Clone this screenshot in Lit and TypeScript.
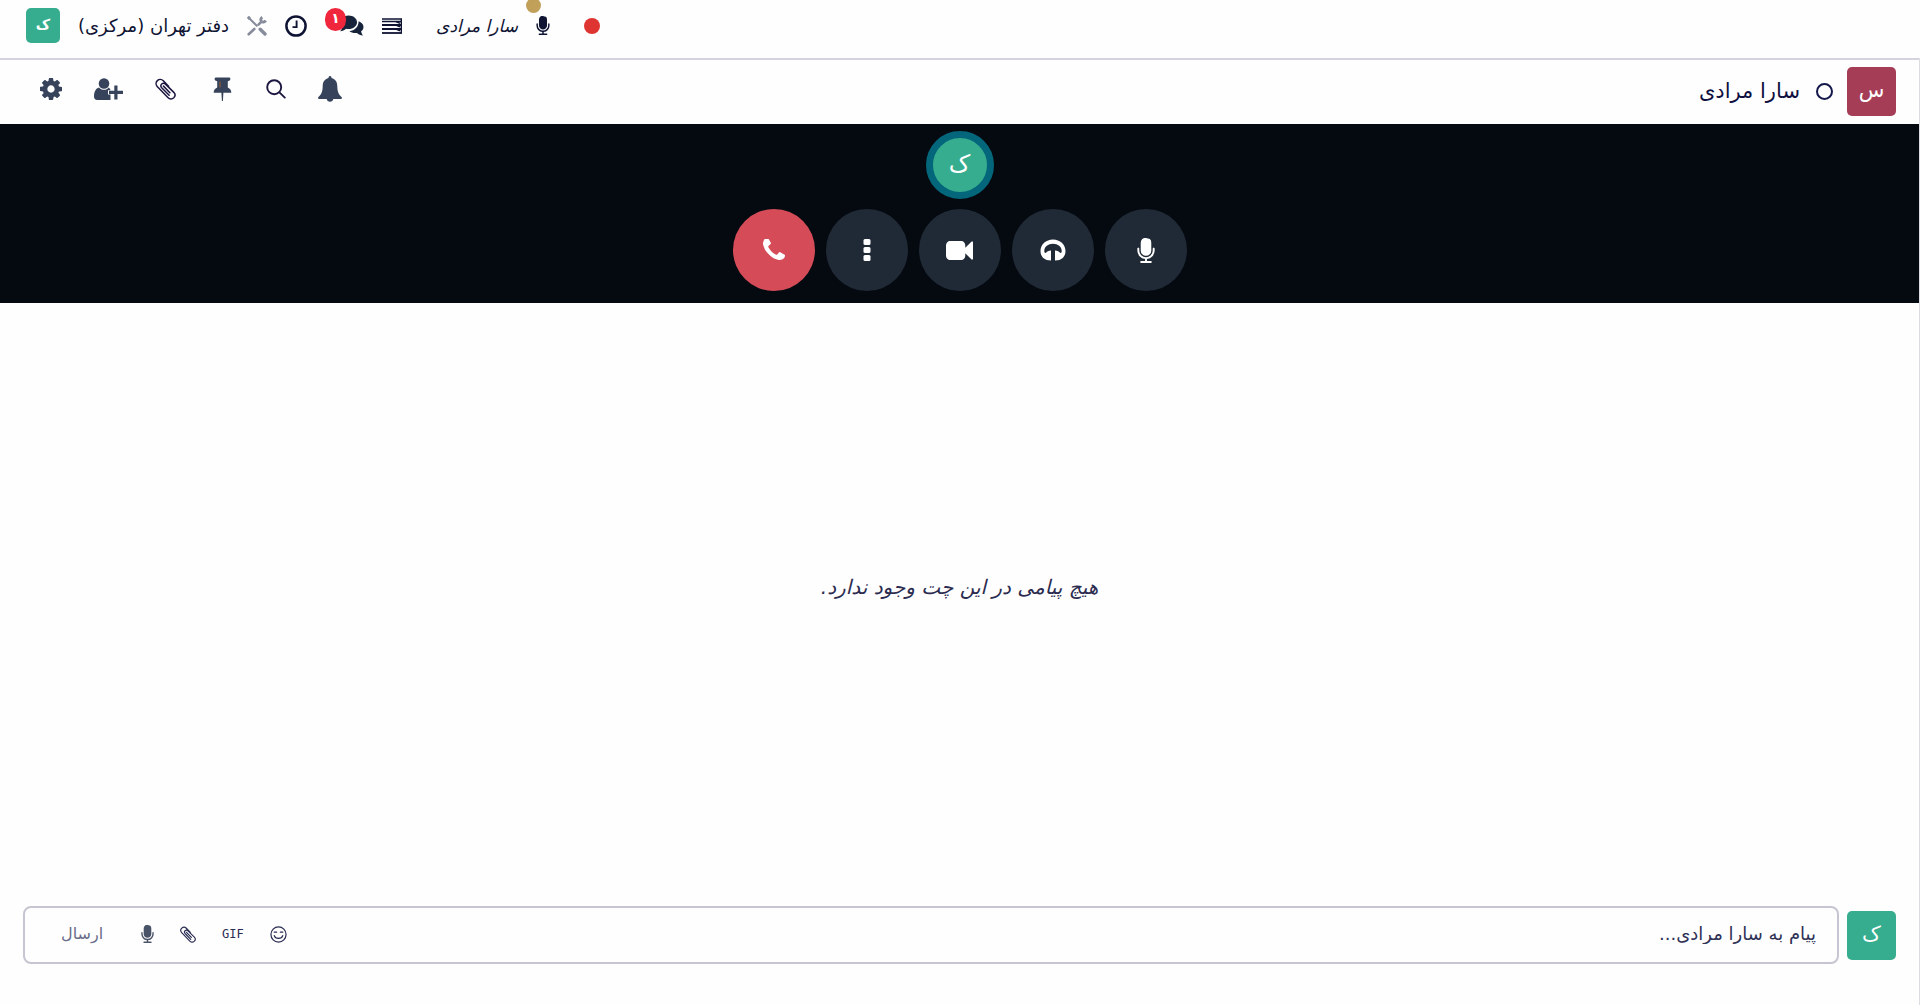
import { LitElement, html, css, svg, TemplateResult } from "lit";
import { customElement, property } from "lit/decorators.js";

interface Glyph {
  box: string;
  body: TemplateResult;
}

const glyphs: Record<string, Glyph> = {
  phone: {
    box: "192 192 1408 1408",
    body: svg`<path fill="currentColor" d="M1600 1240q0 27-10 70.5t-21 68.5q-21 50-122 106-94 51-186 51-27 0-53-3.5t-57.5-12.5-47-14.5-55.5-20.5-49-18q-98-35-175-83-127-79-264-216t-216-264q-48-77-83-175-3-9-18-49t-20.5-55.5-14.5-47-12.5-57.5-3.5-53q0-92 51-186 56-101 106-122 25-11 68.5-21t70.5-10q14 0 21 3 18 6 53 76 11 19 30 54t35 63.5 31 53.5q3 4 17.5 25t21.5 35.5 7 28.5q0 20-28.5 50t-62 55-62 53-28.5 46q0 9 5 22.5t8.5 20.5 14 24 11.5 19q76 137 174 235t235 174q2 1 19 11.5t24 14 20.5 8.5 22.5 5q18 0 46-28.5t53-62 55-62 50-28.5q14 0 28.5 7t35.5 21.5 25 17.5q25 15 53.5 31t63.5 35 54 30q70 35 76 53 3 7 3 21z"/>`,
  },
  more: {
    box: "0 0 8 22",
    body: svg`<g fill="currentColor"><rect x="0.5" y="0" width="7" height="6" rx="1.5"/><rect x="0.5" y="8" width="7" height="6" rx="1.5"/><rect x="0.5" y="16" width="7" height="6" rx="1.5"/></g>`,
  },
  video: {
    box: "0 288 1792 1216",
    body: svg`<path fill="currentColor" d="M1792 352v1088q0 42-39 59-13 5-25 5-27 0-45-19l-403-403v166q0 119-84.5 203.5t-203.5 84.5h-704q-119 0-203.5-84.5t-84.5-203.5v-704q0-119 84.5-203.5t203.5-84.5h704q119 0 203.5 84.5t84.5 203.5v165l403-402q18-19 45-19 12 0 25 5 39 17 39 59z"/>`,
  },
  headphones: {
    box: "0 0 26 22",
    body: svg`<path fill="currentColor" d="M13 .5C5.900.500.500 5.500.500 12c0 3.200 1.300 6 3.500 7.500 1.500 1.100 3.500 2 7 2V11.500C8.500 11.500 6.800 12.400 5.800 14 4.500 14 4.300 13 4.300 12 4.300 7.800 8.200 4.800 13 4.800s8.700 3 8.700 7.200c0 1-.2 2-1.500 2C19.200 12.400 17.500 11.500 15 11.500V21.500c3.500 0 5.500-.9 7-2 2.200-1.500 3.500-4.300 3.500-7.500C25.500 5.500 20.100.5 13 .5z"/>`,
  },
  mic: {
    box: "320 0 1152 1664",
    body: svg`<path fill="currentColor" d="M1472 704v128q0 221-147.500 384.500t-364.500 187.500v132h256q26 0 45 19t19 45-19 45-45 19h-640q-26 0-45-19t-19-45 19-45 45-19h256v-132q-217-24-364.500-187.500t-147.500-384.500v-128q0-26 19-45t45-19 45 19 19 45v128q0 185 131.500 316.500t316.500 131.500 316.500-131.500 131.500-316.500v-128q0-26 19-45t45-19 45 19 19 45zm-224-384v512q0 145-103 248.500t-249 103.500-249-103.500-103-248.500v-512q0-145 103-248.500t249-71.500 249 71.500 103 248.500z"/>`,
  },
  cog: {
    box: "128 128 1536 1536",
    body: svg`<path fill="currentColor" d="M1152 896q0-106-75-181t-181-75-181 75-75 181 75 181 181 75 181-75 75-181zm512-109v222q0 12-8 23t-20 13l-185 28q-19 54-39 91 35 50 107 138 10 12 10 25t-9 23q-27 37-99 108t-94 71q-12 0-26-9l-138-108q-44 23-91 38-16 136-29 186-7 28-36 28h-222q-14 0-24.500-8.500t-11.500-21.500l-28-184q-49-16-90-37l-141 107q-10 9-25 9-14 0-25-11-126-114-165-168-7-10-7-23 0-12 8-23 15-21 51-66.500t54-70.500q-27-50-41-99l-183-27q-13-2-21-12.500t-8-23.500v-222q0-12 8-23t19-13l186-28q14-46 39-92-40-57-107-138-10-12-10-24 0-10 9-23 26-36 98.500-107.500t94.500-71.500q13 0 26 10l138 107q44-23 91-38 16-136 29-186 7-28 36-28h222q14 0 24.500 8.500t11.500 21.500l28 184q49 16 90 37l142-107q9-9 24-9 13 0 25 10 129 119 165 170 7 8 7 22 0 12-8 23-15 21-51 66.500t-54 70.500q26 50 41 98l183 28q13 2 21 12.500t8 23.500z"/>`,
  },
  userPlus: {
    box: "0 0 29 22",
    body: svg`<g fill="currentColor"><circle cx="10" cy="5.500" r="5.300"/><path d="M5 9.500C2 10.200 0 13.500 0 18.500 0 20.800 1.200 22 3.200 22H16.500V16.500H14V12.300h2.600C16 10.800 15.500 10 14.800 9.500 13.500 11 12 11.800 10 11.800S6.300 11 5 9.500z"/><path d="M20.300 7.500h3.200v5.200H29v3.200h-5.500V21.500h-3.200v-5.600H15v-3.200h5.300z"/></g>`,
  },
  clip: {
    box: "0 0 22 22",
    body: svg`<path fill="none" stroke="currentColor" stroke-width="1.600" stroke-linecap="round" stroke-linejoin="round" d="M14.200 8.200 8.700 2.400C7 .6 4.300.500 2.500 2.200.700 3.900.700 6.600 2.300 8.300L13.500 20c1.800 1.800 4.500 1.800 6.200.2 1.600-1.600 1.600-4 0-5.700L11 5.900C9.800 4.800 8.100 4.800 7 5.800c-1 1-1 2.700 0 3.800l7.800 8M8.900 8l6.700 6.900"/>`,
  },
  pin: {
    box: "-1 0 26 24",
    body: svg`<path fill="currentColor" d="M6.500.5h14c1 0 1.300 2.600.2 3L18.800 4.200V10.500c2.300 1 3.500 2.700 3.500 5.300H14.400L13.900 24h-1L12.400 15.800H4.700c0-2.600 1.200-4.300 3.500-5.300V4.200L6.300 3.500C5.200 3 5.500.5 6.500.5z"/><path stroke="#8b5a3c" stroke-width="1.200" d="M11 4.500v6"/>`,
  },
  search: {
    box: "0 0 20 20",
    body: svg`<g fill="none" stroke="currentColor" stroke-width="1.900" stroke-linecap="round"><circle cx="8.200" cy="8.200" r="7"/><path d="m13.400 13.400 5.400 5.200"/></g>`,
  },
  bell: {
    box: "0 0 24 26",
    body: svg`<path fill="currentColor" d="M12 0c1 0 1.500.8 1.500 1.900C17.500 2.900 19.300 6 19.300 10c0 6 1.600 8.700 4.500 11.200.3 1-.2 1.800-1.200 1.800H15.300C15 24.800 13.700 25.800 12 25.800S9 24.800 8.700 23H1.400C.4 23-.1 22.200.2 21.200 3.100 18.700 4.700 16 4.700 10c0-4 1.800-7.100 5.800-8.100C10.500.8 11 0 12 0z"/>`,
  },
  tools: {
    box: "0 0 20 20",
    body: svg`<g fill="none" stroke="currentColor"><path stroke-width="2.600" stroke-linecap="round" d="M1.700 18.300 7.300 13M11.500 8.600l3-3"/><path stroke-width="2.800" d="M18.700 4.500c-1 1.800-3.200 2-4.300.9s-.8-3.200.9-4.200"/><path stroke-width="2" stroke-linecap="round" d="m2 2 7.800 7.800"/><path stroke-width="3.400" stroke-linecap="round" d="m13.200 13.200 4.800 4.800"/><path stroke-width="3" d="M.8 2.800 3 .8"/></g>`,
  },
  clock: {
    box: "0 0 22 22",
    body: svg`<g fill="none" stroke="currentColor"><circle cx="11" cy="11" r="9.600" stroke-width="2.500"/><path stroke-width="1.900" d="M11.600 5.500v6.600H7.500"/></g>`,
  },
  comments: {
    box: "0 0 24 21",
    body: svg`<g fill="currentColor"><path d="M8.500.5C13.300.5 17 3.400 17 7.200s-3.700 6.800-8.500 6.800c-.9 0-1.700-.1-2.500-.3C4.500 15 2.500 16 0 16.300 1.200 15 1.900 13.800 2.200 12.200 0 10.800 0 9 0 7.200 0 3.400 3.700.5 8.500.5z"/><path d="M18.600 6.300c2.800.9 4.900 3 4.900 5.600 0 1.700-.9 3.300-2.400 4.400.3 1.600.8 2.700 1.900 4.200-2.500-.3-4.500-1.200-6-2.600-3 .4-5.800-.3-7.600-1.700 5.300-.6 9.300-4.200 9.200-9.900z"/></g>`,
  },
  list: {
    box: "0 0 20 16",
    body: svg`<g fill="none" stroke="currentColor"><path stroke-width="1.500" d="M0 1h20M0 3.600h20"/><path stroke-width="2" d="M0 7h20M0 11h20"/><path stroke-width="1.800" d="M0 15h20"/><path stroke-width="1.400" d="M19.300 1v14M14 3.500l4 1.800M14 7l4 1.800M14 11l4 1.800"/></g>`,
  },
  smile: {
    box: "0 0 18 18",
    body: svg`<g fill="none" stroke="currentColor" stroke-width="1.300" stroke-linecap="round"><circle cx="9" cy="9" r="8"/><path d="M4.500 6.500h2.500M11 6.500h2.500M4.500 10.200c1.200 4 7.800 4 9 0"/></g>`,
  },
};

const icon = (name: string, width: number, height: number) => html`<svg
  width=${width}
  height=${height}
  viewBox=${glyphs[name].box}
  preserveAspectRatio="xMidYMid meet"
  aria-hidden="true"
>${glyphs[name].body}</svg>`;

const controls = css`
  :host {
    display: block;
  }
  svg {
    display: block;
    flex: none;
  }
  button {
    display: flex;
    align-items: center;
    justify-content: center;
    flex: none;
    margin: 0;
    padding: 0;
    border: 0;
    background: none;
    color: inherit;
    font: inherit;
    cursor: pointer;
  }
`;

@customElement("user-avatar")
class UserAvatar extends LitElement {
  @property() letter = "";

  static styles = css`
    :host {
      display: flex;
      align-items: center;
      justify-content: center;
      flex: none;
      width: 49px;
      height: 49px;
      border-radius: 5px;
      background: #37ad8f;
      color: #fff;
      font-size: 21px;
      line-height: 24px;
    }
    .letter {
      padding-bottom: 3px;
    }
  `;

  render() {
    return html`<span class="letter">${this.letter}</span>`;
  }
}

@customElement("top-bar")
class TopBar extends LitElement {
  static styles = [
    controls,
    css`
      .bar {
        display: flex;
        align-items: flex-start;
        justify-content: flex-end;
        height: 58px;
        padding: 0 26px;
        box-sizing: border-box;
        color: #0f1433;
        font-size: 17px;
        line-height: 24px;
      }
      .inner {
        display: flex;
        align-items: center;
        gap: 18px;
        height: 51px;
      }
      .recording {
        width: 16px;
        height: 16px;
        margin-left: 16px;
        border-radius: 50%;
        background: #df3532;
      }
      .call {
        position: relative;
      }
      .status {
        position: absolute;
        left: -10px;
        top: -18px;
        width: 15px;
        height: 15px;
        border-radius: 50%;
        background: #c1a05a;
      }
      .caller {
        margin-left: 16px;
        font-style: italic;
      }
      .messages {
        position: relative;
        padding-left: 15px;
        color: #17233b;
      }
      .count {
        position: absolute;
        left: 0;
        top: -7px;
        width: 21px;
        height: 23px;
        border-radius: 12px;
        background: #f0263c;
        color: #fff;
        font-size: 14px;
        font-weight: bold;
        line-height: 20px;
        text-align: center;
      }
      .tools {
        color: #868c9b;
      }
      .company {
        font-size: 18px;
      }
      .me {
        width: 34px;
        height: 35px;
        font-size: 14px;
        font-weight: bold;
      }
    `,
  ];

  render() {
    return html`<header class="bar">
      <div class="inner">
        <button class="recording" aria-label="ضبط"></button>
        <button class="call" aria-label="میکروفون">
          ${icon("mic", 14, 19)}<span class="status"></span>
        </button>
        <span class="caller">سارا مرادی</span>
        <button aria-label="فهرست">${icon("list", 20, 16)}</button>
        <button class="messages" aria-label="پیام‌ها">
          ${icon("comments", 24, 21)}<span class="count">۱</span>
        </button>
        <button aria-label="فعالیت‌ها">${icon("clock", 22, 22)}</button>
        <button class="tools" aria-label="ابزارها">${icon("tools", 20, 20)}</button>
        <button class="company">دفتر تهران (مرکزی)</button>
        <user-avatar class="me" letter="ک"></user-avatar>
      </div>
    </header>`;
  }
}

@customElement("thread-header")
class ThreadHeader extends LitElement {
  static styles = [
    controls,
    css`
      .header {
        display: flex;
        align-items: center;
        justify-content: space-between;
        height: 66px;
        padding: 0 23px 2px 40px;
        box-sizing: border-box;
        border-top: 2px solid #d5d3de;
        color: #0f1040;
      }
      .person {
        display: flex;
        align-items: center;
        gap: 14px;
      }
      .partner {
        background: #a63d57;
      }
      .offline {
        width: 17px;
        height: 17px;
        box-sizing: border-box;
        border: 2px solid #14184a;
        border-radius: 50%;
      }
      .name {
        margin: 0 2px 0 0;
        font-size: 21px;
        font-weight: normal;
        line-height: 24px;
      }
      .actions {
        display: flex;
        align-items: center;
        gap: 32px;
        padding-bottom: 5px;
        color: #36435b;
      }
      .dark {
        color: #1b1740;
      }
    `,
  ];

  render() {
    return html`<div class="header">
      <div class="person">
        <user-avatar class="partner" letter="س"></user-avatar>
        <span class="offline"></span>
        <h1 class="name">سارا مرادی</h1>
      </div>
      <div class="actions">
        <button aria-label="اعلان‌ها">${icon("bell", 24, 26)}</button>
        <button class="dark" aria-label="جستجو">${icon("search", 20, 20)}</button>
        <button aria-label="سنجاق‌شده‌ها">${icon("pin", 26, 24)}</button>
        <button class="dark" aria-label="پیوست‌ها">${icon("clip", 21, 22)}</button>
        <button aria-label="افزودن کاربر">${icon("userPlus", 29, 22)}</button>
        <button aria-label="تنظیمات">${icon("cog", 22, 22)}</button>
      </div>
    </div>`;
  }
}

@customElement("call-panel")
class CallPanel extends LitElement {
  static styles = [
    controls,
    css`
      .panel {
        display: flex;
        flex-direction: column;
        align-items: center;
        gap: 10px;
        padding: 7px 0 12px;
        background: #050a11;
      }
      .speaker {
        width: 54px;
        height: 54px;
        border: 7px solid #04667a;
        border-radius: 50%;
        font-size: 24px;
      }
      .buttons {
        display: flex;
        gap: 11px;
      }
      .round {
        width: 82px;
        height: 82px;
        border-radius: 50%;
        background: #202a36;
        color: #fff;
      }
      .hangup {
        background: #d54c58;
      }
    `,
  ];

  render() {
    return html`<section class="panel">
      <user-avatar class="speaker" letter="ک"></user-avatar>
      <div class="buttons">
        <button class="round" aria-label="بی‌صدا">${icon("mic", 18, 25)}</button>
        <button class="round" aria-label="قطع صدا">${icon("headphones", 26, 22)}</button>
        <button class="round" aria-label="دوربین">${icon("video", 27, 19)}</button>
        <button class="round" aria-label="بیشتر">${icon("more", 8, 22)}</button>
        <button class="round hangup" aria-label="پایان تماس">${icon("phone", 22, 22)}</button>
      </div>
    </section>`;
  }
}

@customElement("message-composer")
class MessageComposer extends LitElement {
  static styles = [
    controls,
    css`
      .composer {
        display: flex;
        align-items: center;
        gap: 8px;
        padding: 0 23px 41px;
      }
      .box {
        display: flex;
        align-items: center;
        gap: 26px;
        flex: 1;
        min-width: 0;
        height: 58px;
        padding: 0 21px 2px 36px;
        box-sizing: border-box;
        border: 2px solid #c6c5d1;
        border-radius: 8px;
        color: #2a2d52;
      }
      .text {
        flex: 1;
        min-width: 0;
        padding: 0;
        border: 0;
        outline: 0;
        background: none;
        color: #2a2d52;
        font: inherit;
        font-size: 18px;
        line-height: 24px;
      }
      .text::placeholder {
        color: #2f3156;
        opacity: 1;
      }
      .gif {
        font-family: "DejaVu Sans Mono", monospace;
        font-size: 12px;
      }
      .send {
        margin-right: 12px;
        color: #686d8a;
        font-size: 16px;
        line-height: 24px;
      }
      .mic {
        color: #4a5468;
      }
    `,
  ];

  render() {
    return html`<form class="composer" @submit=${(e: Event) => e.preventDefault()}>
      <user-avatar letter="ک"></user-avatar>
      <div class="box">
        <input class="text" type="text" aria-label="پیام" placeholder="پیام به سارا مرادی..." />
        <button type="button" aria-label="شکلک">${icon("smile", 17, 17)}</button>
        <button type="button" class="gif">GIF</button>
        <button type="button" aria-label="پیوست">${icon("clip", 16, 17)}</button>
        <button type="button" class="mic" aria-label="پیام صوتی">${icon("mic", 13, 18)}</button>
        <button type="submit" class="send">ارسال</button>
      </div>
    </form>`;
  }
}

@customElement("app-root")
class AppRoot extends LitElement {
  static styles = css`
    :host {
      display: block;
      font-family: "DejaVu Sans", sans-serif;
    }
    .page {
      display: flex;
      flex-direction: column;
      min-height: 100vh;
      background: #fefefe;
    }
    .thread {
      display: flex;
      flex-direction: column;
      flex: 1;
      border-right: 1px solid #dcdce2;
    }
    .messages {
      display: flex;
      align-items: center;
      justify-content: center;
      flex: 1;
    }
    .empty {
      margin: 0;
      padding-bottom: 36px;
      color: #2b2c50;
      font-size: 20px;
      font-style: italic;
      line-height: 24px;
    }
  `;

  render() {
    return html`<div class="page" dir="rtl">
      <top-bar></top-bar>
      <main class="thread">
        <thread-header></thread-header>
        <call-panel></call-panel>
        <div class="messages">
          <p class="empty">هیچ پیامی در این چت وجود ندارد.</p>
        </div>
        <message-composer></message-composer>
      </main>
    </div>`;
  }
}
